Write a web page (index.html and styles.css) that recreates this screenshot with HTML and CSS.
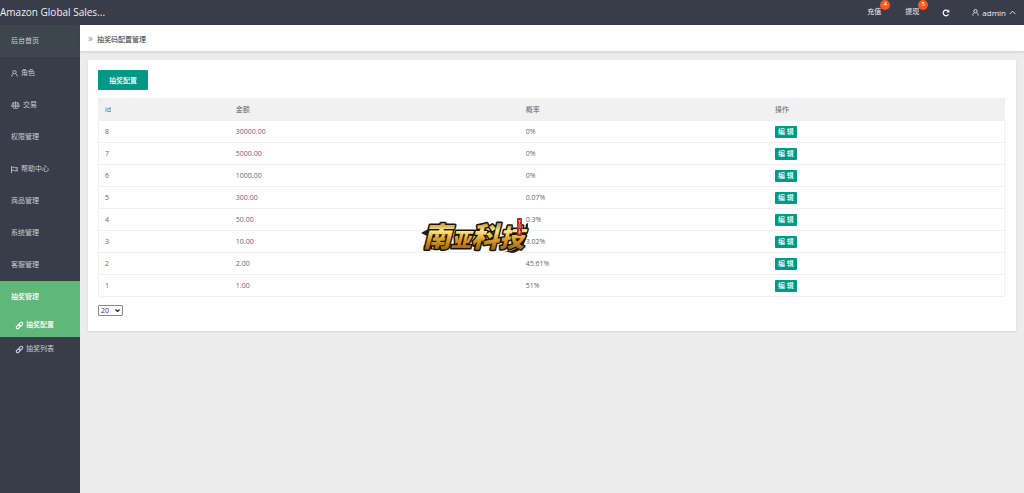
FILE: index.html
```html
<!DOCTYPE html>
<html lang="zh-CN">
<head>
  <meta charset="UTF-8">
  <title>抽奖码配置管理</title>
  <link rel="stylesheet" href="styles.css">
</head>
<body>

  <header class="header">
    <a class="brand" href="#">Amazon Global Sales...</a>
    <nav class="top-nav">
      <a href="#">充值<span class="badge">4</span></a>
      <a href="#">提现<span class="badge">5</span></a>
      <button class="refresh" type="button" aria-label="刷新">
        <svg class="icon" viewBox="0 0 16 16"><path d="M13 10.5A5.6 5.6 0 1 1 12 4" stroke-width="2.4"/><path d="M14.6 1v6H8.6z" fill="currentColor" stroke="none"/></svg>
      </button>
      <a class="user" href="#">
        <svg class="icon" viewBox="0 0 16 16"><circle cx="8" cy="5" r="3.8"/><path d="M5.5 8.4C3 9.5 2 12 2 15M10.5 8.4C13 9.5 14 12 14 15"/></svg>
        admin
        <svg class="icon" viewBox="0 0 16 16"><path d="M1.500 11.500L8 5l6.500 6.500"/></svg>
      </a>
    </nav>
  </header>

  <div class="wrap">
    <aside class="sidebar">
      <a class="item home" href="#">后台首页</a>
      <a class="item" href="#">
        <svg class="icon" viewBox="0 0 16 16"><circle cx="8" cy="5" r="3.8"/><path d="M5.5 8.4C3 9.5 2 12 2 15M10.5 8.4C13 9.5 14 12 14 15"/></svg>
        角色
      </a>
      <a class="item" href="#">
        <svg class="icon wide" viewBox="0 0 18 16"><path d="M9 1v13M3 3.500h12M4 14.500h10M4 4l-3 6h6zM14 4l-3 6h6zM1 10c1 2.500 5 2.500 6 0M11 10c1 2.500 5 2.500 6 0"/></svg>
        交易
      </a>
      <a class="item" href="#">权限管理</a>
      <a class="item" href="#">
        <svg class="icon" viewBox="0 0 16 16"><path d="M1 1v15M1 2.500h6l2 1.500h6.500l-2.500 3.500 2.500 3.500H8.500L6.500 9.500H1"/></svg>
        帮助中心
      </a>
      <a class="item" href="#">商品管理</a>
      <a class="item" href="#">系统管理</a>
      <a class="item" href="#">客服管理</a>
      <a class="item active" href="#">抽奖管理</a>
      <a class="item sub active" href="#">
        <svg class="icon link" viewBox="0 0 16 16"><g transform="rotate(-45 8 8)"><rect x="-1" y="5" width="10" height="6" rx="3"/><rect x="7" y="5" width="10" height="6" rx="3"/></g></svg>
        抽奖配置
      </a>
      <a class="item sub" href="#">
        <svg class="icon link" viewBox="0 0 16 16"><g transform="rotate(-45 8 8)"><rect x="-1" y="5" width="10" height="6" rx="3"/><rect x="7" y="5" width="10" height="6" rx="3"/></g></svg>
        抽奖列表
      </a>
    </aside>

    <main class="main">
      <div class="crumb"><span class="arrow">»</span>抽奖码配置管理</div>

      <section class="card">
        <button class="btn" type="button">抽奖配置</button>

        <table class="table">
          <thead>
            <tr><th class="col-id">id</th><th class="col-money">金额</th><th class="col-rate">概率</th><th>操作</th></tr>
          </thead>
          <tbody>
            <tr><td>8</td><td>30000.00</td><td>0%</td><td><button class="btn-edit" type="button">编 辑</button></td></tr>
            <tr><td>7</td><td>5000.00</td><td>0%</td><td><button class="btn-edit" type="button">编 辑</button></td></tr>
            <tr><td>6</td><td>1000.00</td><td>0%</td><td><button class="btn-edit" type="button">编 辑</button></td></tr>
            <tr><td>5</td><td>300.00</td><td>0.07%</td><td><button class="btn-edit" type="button">编 辑</button></td></tr>
            <tr><td>4</td><td>50.00</td><td>0.3%</td><td><button class="btn-edit" type="button">编 辑</button></td></tr>
            <tr><td>3</td><td>10.00</td><td>3.02%</td><td><button class="btn-edit" type="button">编 辑</button></td></tr>
            <tr><td>2</td><td>2.00</td><td>45.61%</td><td><button class="btn-edit" type="button">编 辑</button></td></tr>
            <tr><td>1</td><td>1.00</td><td>51%</td><td><button class="btn-edit" type="button">编 辑</button></td></tr>
          </tbody>
        </table>

        <div class="pager">
          <select class="page-size" aria-label="每页条数">
            <option>10</option>
            <option selected>20</option>
            <option>50</option>
          </select>
          <svg class="caret" viewBox="0 0 10 6"><path d="M1 1l4 4 4-4"/></svg>
        </div>
      </section>
    </main>
  </div>

  <svg class="watermark" viewBox="0 0 110 42" role="img" aria-label="南亚科技">
    <defs>
      <linearGradient id="gold" x1="0" y1="0" x2="0" y2="1">
        <stop offset="0.1" stop-color="#a86a14"/>
        <stop offset="0.4" stop-color="#ffe98e"/>
        <stop offset="0.6" stop-color="#dd9f2a"/>
        <stop offset="1" stop-color="#7a480c"/>
      </linearGradient>
    </defs>
    <path class="blade" d="M84 37c12 1 19-5 22-27l2-1c0 18-6 29-16 30z"/>
    <path class="blade" d="M1 19l9-5 3 4-6 4zM3 33l7-8 3 11z"/>
    <text class="logo-text" x="3" y="33"><tspan class="big">南</tspan><tspan class="small">亚</tspan><tspan class="big">科</tspan><tspan class="mid">技</tspan></text>
    <rect class="seal" x="97" y="4" width="5" height="18" rx="1"/>
    <path d="M98 7h3M99.500 6v4M98 11h3M98 13h3M99.500 15v5M98 18h3" stroke="#f3c8bd" stroke-width="0.7"/>
  </svg>

</body>
</html>
```
FILE: styles.css
```css
* {
  box-sizing: border-box;
}

body {
  margin: 0;
  min-height: 100vh;
  display: flex;
  flex-direction: column;
  font-family: "Open Sans", "Noto Sans CJK SC", sans-serif;
  font-size: 7px;
  line-height: 12px;
  color: #666;
  background: #ececec;
}

a {
  color: inherit;
  text-decoration: none;
}

button {
  font-family: inherit;
  border: none;
  cursor: pointer;
}

.icon {
  width: 7px;
  height: 7px;
  flex: none;
  fill: none;
  stroke: currentColor;
  stroke-width: 2;
}

.icon.wide {
  width: 9px;
  height: 8px;
  stroke-width: 1.5;
}

.icon.link {
  stroke-width: 2.6;
  overflow: visible;
}

/* header */
.header {
  display: flex;
  justify-content: space-between;
  height: 25px;
  background: #393d49;
  color: #f0f0f2;
}

.brand {
  font-size: 10px;
  line-height: 24px;
}

.top-nav {
  display: flex;
  font-size: 7px;
  line-height: 24px;
}

.top-nav a {
  position: relative;
  padding: 0 12px;
}

.badge {
  position: absolute;
  top: 0;
  right: 3px;
  width: 10px;
  height: 10px;
  border-radius: 50%;
  background: #ff5722;
  color: #fff;
  font-size: 6px;
  line-height: 9px;
  text-align: center;
}

.refresh {
  display: flex;
  align-items: center;
  padding: 0 11px;
  background: none;
  color: #fff;
}

.refresh .icon {
  width: 8px;
  height: 8px;
}

.top-nav .user {
  display: flex;
  align-items: center;
  gap: 3px;
  padding: 0 8px 0 11px;
  font-size: 8px;
}

/* sidebar */
.wrap {
  flex: 1;
  display: flex;
}

.sidebar {
  width: 80px;
  flex: none;
  background: #393d49;
  color: #c9cbd0;
}

.item {
  display: flex;
  align-items: center;
  gap: 3px;
  height: 32px;
  padding-left: 11px;
}

.item.home {
  background: #3d464d;
}

.item.sub {
  height: 24px;
  padding-left: 16px;
}

.item.active {
  background: #5fb878;
  color: #fff;
  font-weight: 500;
}

/* content */
.main {
  flex: 1;
}

.crumb {
  height: 27px;
  padding-left: 8px;
  line-height: 27px;
  background: #fff;
  color: #333;
  border-bottom: 1px solid #ddd;
  box-shadow: 0 1px 2px rgba(0,0,0,0.08);
}

.arrow {
  margin-right: 4px;
  font-size: 10px;
  color: #999;
}

.card {
  margin: 8px 8px 0;
  padding: 10px 11px 15px 10px;
  background: #fff;
  box-shadow: 0 1px 2px rgba(0,0,0,0.1);
}

.btn {
  display: block;
  height: 20px;
  padding: 0 11px;
  border-radius: 1px;
  background: #009688;
  color: #fff;
  font-size: 7px;
  font-weight: 500;
}

.table {
  width: 100%;
  margin: 8px 0;
  table-layout: fixed;
  border-collapse: collapse;
  border: 1px solid #f0f0f0;
}

.table th,
.table td {
  height: 22px;
  padding: 0 6px;
  text-align: left;
  font-weight: normal;
  border-bottom: 1px solid #f0f0f0;
}

.table thead {
  background: #f1f1f1;
}

.col-id {
  width: 14.5%;
}

.col-money {
  width: 32%;
}

.col-rate {
  width: 27.5%;
}

.btn-edit {
  display: block;
  height: 12px;
  padding: 0 3px;
  border-radius: 1px;
  background: #009688;
  color: #fff;
  font-size: 7px;
  font-weight: 500;
  line-height: 12px;
}

.pager {
  display: grid;
  justify-content: start;
  align-items: center;
}

.page-size,
.caret {
  grid-area: 1 / 1;
}

.page-size {
  appearance: none;
  width: 25px;
  height: 11px;
  padding: 0 2px;
  border: 1px solid #888;
  border-radius: 1px;
  background: #fff;
  color: #333;
  font-family: inherit;
  font-size: 7px;
  line-height: 9px;
}

.caret {
  justify-self: end;
  width: 5px;
  height: 3px;
  margin-right: 3px;
  fill: none;
  stroke: #222;
  stroke-width: 2.4;
  pointer-events: none;
}

/* logo floating over the page */
.watermark {
  position: absolute;
  left: 420px;
  top: 214px;
  width: 110px;
  height: 42px;
  overflow: visible;
  pointer-events: none;
}

.logo-text {
  font-family: "Noto Sans CJK SC", sans-serif;
  font-weight: 900;
  font-style: italic;
  fill: url(#gold);
  stroke: #1c1206;
  stroke-width: 3;
  stroke-linejoin: round;
  paint-order: stroke;
}

.logo-text .big {
  font-size: 28px;
}

.logo-text .mid {
  font-size: 25px;
}

.logo-text .small {
  font-size: 20px;
}

.blade {
  fill: #2a1c0c;
}

.seal {
  fill: #b5271d;
}
```
